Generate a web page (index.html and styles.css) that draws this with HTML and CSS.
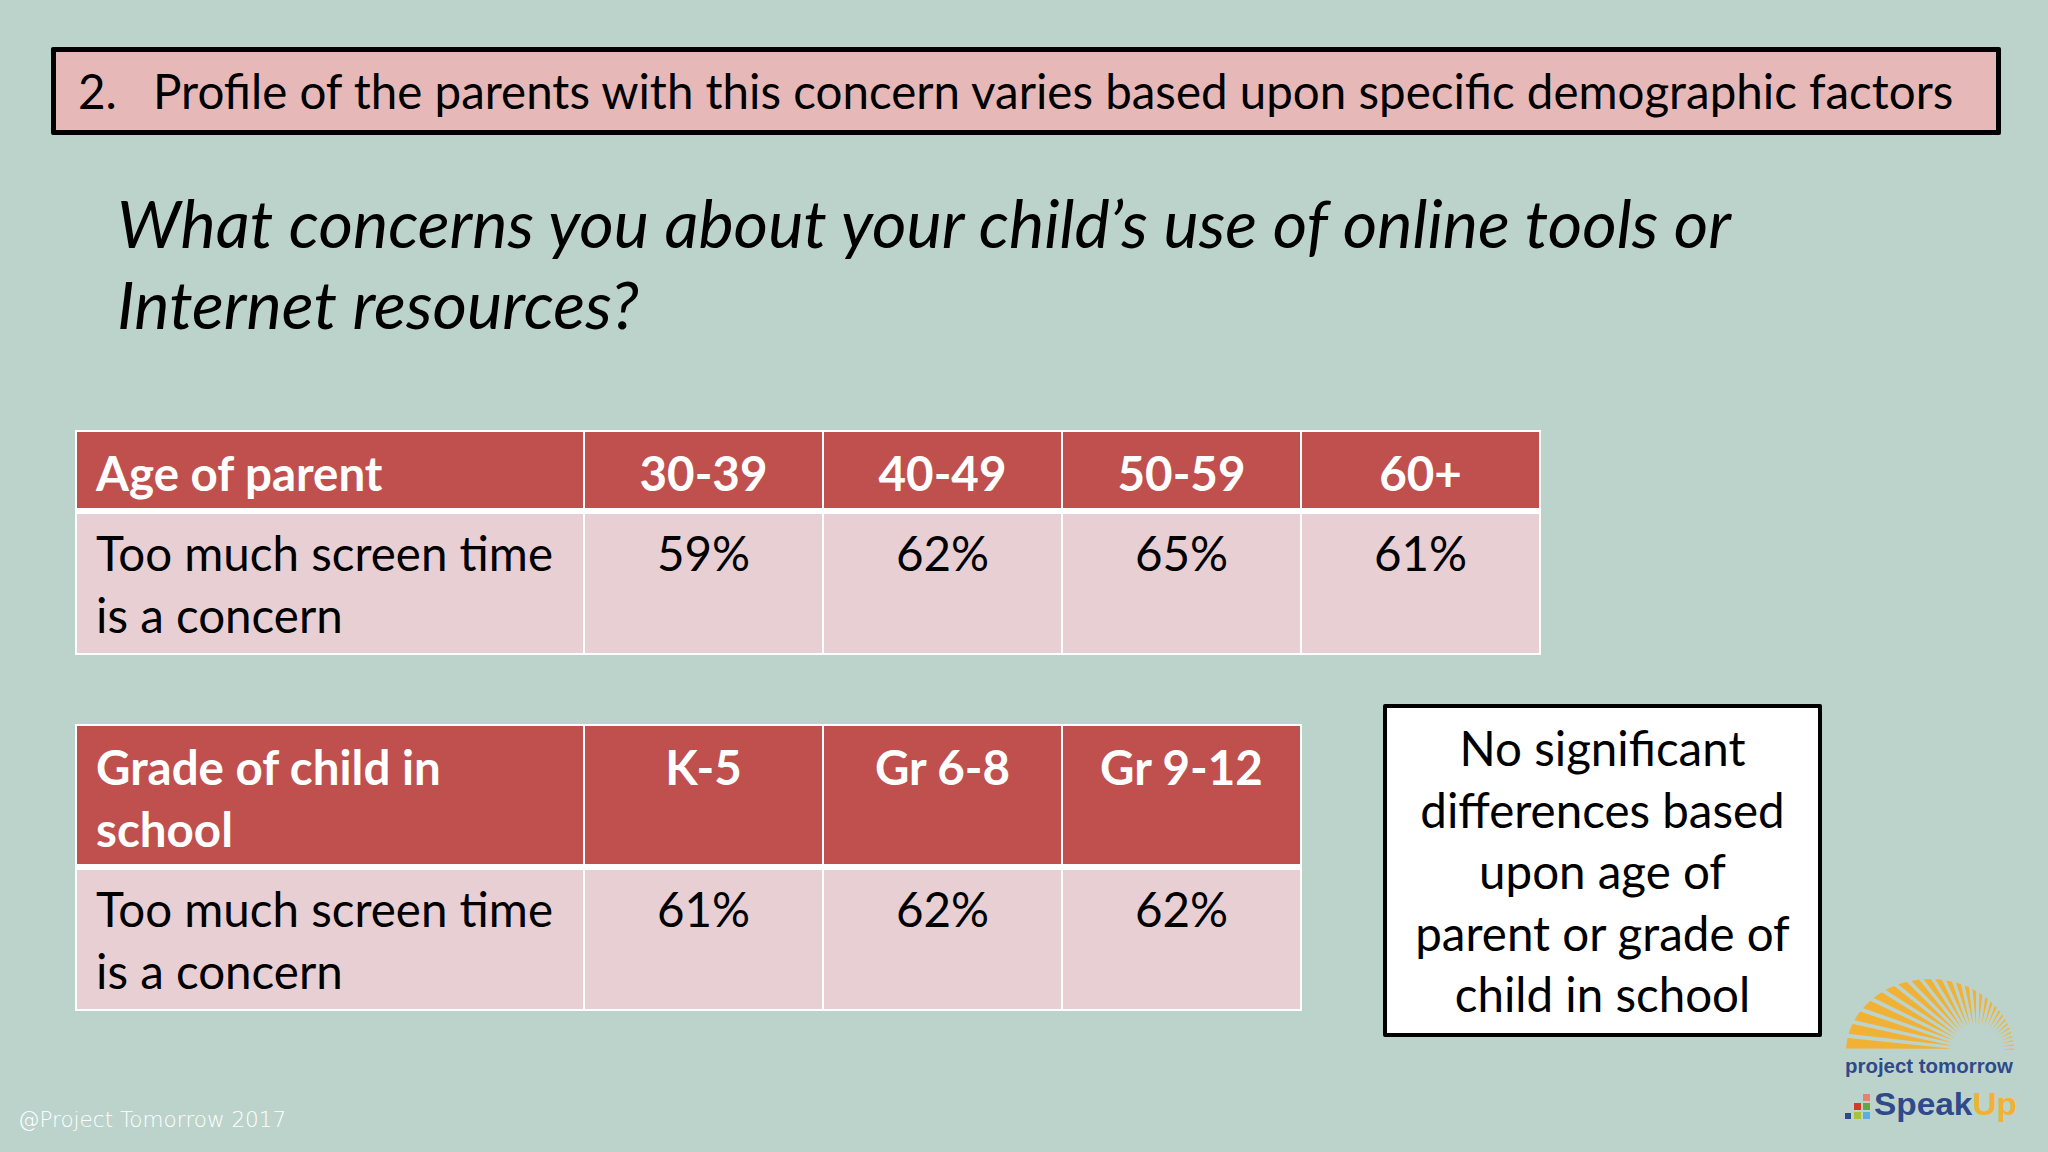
FILE: index.html
```html
<!DOCTYPE html>
<html lang="en">
<head>
<meta charset="utf-8">
<title>Profile of the parents</title>
<link rel="stylesheet" href="styles.css">
</head>
<body>
<div class="slide">
  <div class="banner"><span class="num">2.</span>Profile of the parents with this concern varies based upon specific demographic factors</div>
  <h1 class="question">What concerns you about your child’s use of online tools or<br>Internet resources?</h1>

  <table class="data age">
    <colgroup><col class="c-label"><col class="c-val"><col class="c-val"><col class="c-val"><col class="c-val"></colgroup>
    <tr><th class="lbl">Age of parent</th><th>30-39</th><th>40-49</th><th>50-59</th><th>60+</th></tr>
    <tr><td class="lbl">Too much screen time<br>is a concern</td><td>59%</td><td>62%</td><td>65%</td><td>61%</td></tr>
  </table>

  <div class="lower">
    <div class="lower-left">
      <table class="data grade">
        <colgroup><col class="c-label"><col class="c-val"><col class="c-val"><col class="c-val"></colgroup>
        <tr><th class="lbl">Grade of child in<br>school</th><th>K-5</th><th>Gr 6-8</th><th>Gr 9-12</th></tr>
        <tr><td class="lbl">Too much screen time<br>is a concern</td><td>61%</td><td>62%</td><td>62%</td></tr>
      </table>
      <div class="copyright">@Project Tomorrow 2017</div>
    </div>
    <div class="note">No significant<br>differences based<br>upon age of<br>parent or grade of<br>child in school</div>
    <div class="logo">
      <svg width="176" height="153" viewBox="0 0 176 153" xmlns="http://www.w3.org/2000/svg">
        <defs>
          <clipPath id="sunclip"><path d="M4 79 A84 73 0 0 1 172 79 Z"/></clipPath>
          <polygon id="ray" points="110,77 -70,68 -70,86"/>
        </defs>
        <g clip-path="url(#sunclip)" fill="#f1b135">
          <use href="#ray" transform="rotate(3 135 77)"/>
          <use href="#ray" transform="rotate(9.5 135 77)"/>
          <use href="#ray" transform="rotate(16 135 77)"/>
          <use href="#ray" transform="rotate(22.5 135 77)"/>
          <use href="#ray" transform="rotate(29 135 77)"/>
          <use href="#ray" transform="rotate(35.5 135 77)"/>
          <use href="#ray" transform="rotate(42 135 77)"/>
          <use href="#ray" transform="rotate(48.5 135 77)"/>
          <use href="#ray" transform="rotate(55 135 77)"/>
          <use href="#ray" transform="rotate(61.5 135 77)"/>
          <use href="#ray" transform="rotate(68 135 77)"/>
          <use href="#ray" transform="rotate(74.5 135 77)"/>
          <use href="#ray" transform="rotate(81 135 77)"/>
          <use href="#ray" transform="rotate(87.5 135 77)"/>
          <use href="#ray" transform="rotate(94 135 77)"/>
          <use href="#ray" transform="rotate(100.5 135 77)"/>
          <use href="#ray" transform="rotate(107 135 77)"/>
          <use href="#ray" transform="rotate(113.5 135 77)"/>
          <use href="#ray" transform="rotate(120 135 77)"/>
          <use href="#ray" transform="rotate(126.5 135 77)"/>
          <use href="#ray" transform="rotate(133 135 77)"/>
          <use href="#ray" transform="rotate(139.5 135 77)"/>
          <use href="#ray" transform="rotate(146 135 77)"/>
          <use href="#ray" transform="rotate(152.5 135 77)"/>
          <use href="#ray" transform="rotate(159 135 77)"/>
          <use href="#ray" transform="rotate(165.5 135 77)"/>
          <use href="#ray" transform="rotate(172 135 77)"/>
          <use href="#ray" transform="rotate(178.5 135 77)"/>
        </g>
        <text class="logo-pt" x="3" y="100" textLength="168" lengthAdjust="spacingAndGlyphs">project tomorrow</text>
        <rect x="21" y="121" width="7" height="7" fill="#e8826a"/>
        <rect x="12" y="130" width="7" height="7" fill="#d23b2c"/>
        <rect x="21" y="130" width="7" height="7" fill="#5fa845"/>
        <rect x="3" y="140" width="6" height="6" fill="#2f4a8a"/>
        <rect x="12" y="139" width="7" height="7" fill="#a9c23a"/>
        <rect x="21" y="139" width="7" height="7" fill="#5aaee0"/>
        <text class="logo-su" x="32" y="142" textLength="143" lengthAdjust="spacingAndGlyphs"><tspan fill="#2f4a8a">Speak</tspan><tspan fill="#f1b135">Up</tspan></text>
      </svg>
    </div>
  </div>
</div>
</body>
</html>
```

FILE: styles.css
```css
html, body {
  margin: 0;
  padding: 0;
}

body {
  background: #bcd3cc;
}

.slide {
  width: 2048px;
  height: 1152px;
  display: flex;
  flex-direction: column;
  overflow: hidden;
  font-family: "Lato", "Noto Sans", sans-serif;
  color: #000;
}

.banner {
  box-sizing: border-box;
  margin: 47px 0 0 51px;
  width: 1950px;
  height: 88px;
  border: 5px solid #000;
  border-radius: 2px;
  background: #e6b9b8;
  font-size: 47.5px;
  line-height: 78px;
  padding-left: 22px;
  white-space: nowrap;
}

.num {
  display: inline-block;
  width: 75px;
}

.question {
  margin: 47px 0 0 117px;
  font-size: 66.5px;
  font-style: italic;
  font-weight: 400;
  line-height: 81px;
  white-space: nowrap;
}

.data {
  border-collapse: collapse;
  table-layout: fixed;
  margin-left: 75px;
  font-size: 47.5px;
  line-height: 62px;
}

.age {
  width: 1464px;
  margin-top: 86px;
}

.grade {
  width: 1225px;
  margin-top: 69px;
}

.c-label {
  width: 508px;
}

.c-val {
  width: 239px;
}

.data th,
.data td {
  border: 2px solid #fff;
  text-align: center;
  vertical-align: top;
  white-space: nowrap;
}

.data th {
  background: #c0504d;
  color: #fff;
  font-weight: 700;
  padding: 10px 19px 4px;
  border-bottom-width: 6px;
}

.data td {
  background: #e8cfd3;
  padding: 8px 19px 7px;
  font-weight: 400;
}

.data .lbl {
  text-align: left;
}

.lower {
  display: flex;
  flex: 1;
  min-height: 0;
}

.lower-left {
  display: flex;
  flex-direction: column;
  flex: none;
}

.copyright {
  margin: auto 0 20px 18px;
  font-family: "DejaVu Sans", sans-serif;
  font-weight: 200;
  font-size: 21.5px;
  line-height: 24px;
  color: #ffffff;
  white-space: nowrap;
}

.note {
  box-sizing: border-box;
  flex: none;
  align-self: flex-start;
  margin: 49px 0 0 81px;
  width: 439px;
  height: 333px;
  border: 4px solid #000;
  border-radius: 2px;
  background: #fff;
  padding-top: 9px;
  text-align: center;
  font-size: 47.5px;
  line-height: 61.5px;
  white-space: nowrap;
}

.logo {
  flex: none;
  align-self: flex-end;
  margin: 0 30px 26px auto;
  width: 176px;
  height: 153px;
}

.logo svg {
  display: block;
}

.logo-pt {
  font-family: "Liberation Sans", Arial, sans-serif;
  font-weight: 700;
  font-size: 21px;
  fill: #2f4a8a;
}

.logo-su {
  font-family: "Liberation Sans", Arial, sans-serif;
  font-weight: 700;
  font-size: 32px;
}
```
